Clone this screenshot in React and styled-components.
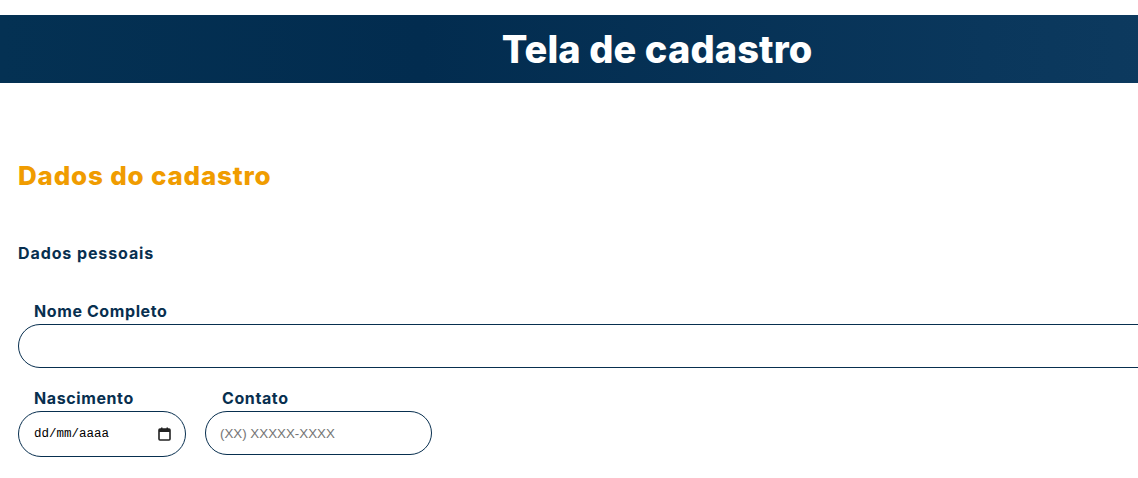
import styled, { createGlobalStyle } from 'styled-components';

const GlobalStyle = createGlobalStyle`
  html, body {
    margin: 0;
    padding: 0;
    overflow: hidden;
    background: #fff;
  }
  body {
    font-family: Inter, "Liberation Sans", sans-serif;
  }
`;

const CalendarIcon = () => (
  <svg width="13" height="14" viewBox="0 0 13 14" aria-hidden="true">
    <rect x="1" y="2" width="11" height="11" rx="1" fill="none" stroke="#222" strokeWidth="1.6" />
    <rect x="1" y="2" width="11" height="3" fill="#222" />
    <rect x="3" y="0.5" width="1.5" height="2.5" fill="#222" />
    <rect x="8.5" y="0.5" width="1.5" height="2.5" fill="#222" />
  </svg>
);

export default () => (
  <Page>
    <GlobalStyle />
    <Header>
      <Title>Tela de cadastro</Title>
    </Header>
    <Form>
      <SectionTitle>Dados do cadastro</SectionTitle>
      <GroupTitle>Dados pessoais</GroupTitle>
      <Field top="38px">
        <Label>Nome Completo</Label>
        <Input type="text" />
      </Field>
      <Row>
        <Field width="168px">
          <Label>Nascimento</Label>
          <DateBox>
            <DateText>dd/mm/aaaa</DateText>
            <CalendarIcon />
          </DateBox>
        </Field>
        <Field width="227px">
          <Label shift="17px">Contato</Label>
          <Input type="tel" placeholder="(XX) XXXXX-XXXX" />
        </Field>
      </Row>
    </Form>
  </Page>
);

const Page = styled.div`
  width: 1314px;
  padding-top: 15px;
`;

const Header = styled.header`
  height: 68px;
  display: flex;
  align-items: center;
  justify-content: center;
  background: linear-gradient(90deg, #043153 0%, #022c4f 32%, #0a375c 75%, #0f3c61 100%);
`;

const Title = styled.h1`
  margin: 0;
  color: #fff;
  font-size: 38px;
  font-weight: 800;
  letter-spacing: 0.1px;
`;

const Form = styled.div`
  padding: 0 18px;
  display: flex;
  flex-direction: column;
`;

const SectionTitle = styled.h2`
  margin: 78px 0 0;
  color: #f09c00;
  font-size: 26px;
  font-weight: 800;
  line-height: 30px;
  letter-spacing: 0.8px;
`;

const GroupTitle = styled.h3`
  margin: 52px 0 0;
  color: #082f4f;
  font-size: 16px;
  font-weight: 700;
  line-height: 20px;
  letter-spacing: 0.9px;
`;

const Field = styled.div`
  display: flex;
  flex-direction: column;
  width: ${p => p.width || 'auto'};
  margin-top: ${p => p.top || '0'};
`;

const Label = styled.label`
  margin: 0 0 3px ${p => p.shift || '16px'};
  color: #082f4f;
  font-size: 16px;
  font-weight: 700;
  line-height: 20px;
  letter-spacing: 0.6px;
`;

const Row = styled.div`
  display: flex;
  align-items: flex-start;
  gap: 19px;
  margin-top: 20px;
`;

const Input = styled.input`
  box-sizing: border-box;
  height: 44px;
  width: 100%;
  border: 1px solid #082f4f;
  border-radius: 22px;
  padding: 0 14px;
  font-family: Arial, "Liberation Sans", sans-serif;
  font-size: 13.33px;
  outline: none;
  background: #fff;

  &::placeholder {
    color: #757575;
  }
`;

const DateBox = styled.div`
  box-sizing: border-box;
  height: 46px;
  border: 1px solid #082f4f;
  border-radius: 23px;
  padding: 0 14px 0 15px;
  display: flex;
  align-items: center;
  justify-content: space-between;
`;

const DateText = styled.span`
  font-family: "Liberation Mono", "DejaVu Sans Mono", monospace;
  font-size: 12.5px;
  color: #000;
`;
